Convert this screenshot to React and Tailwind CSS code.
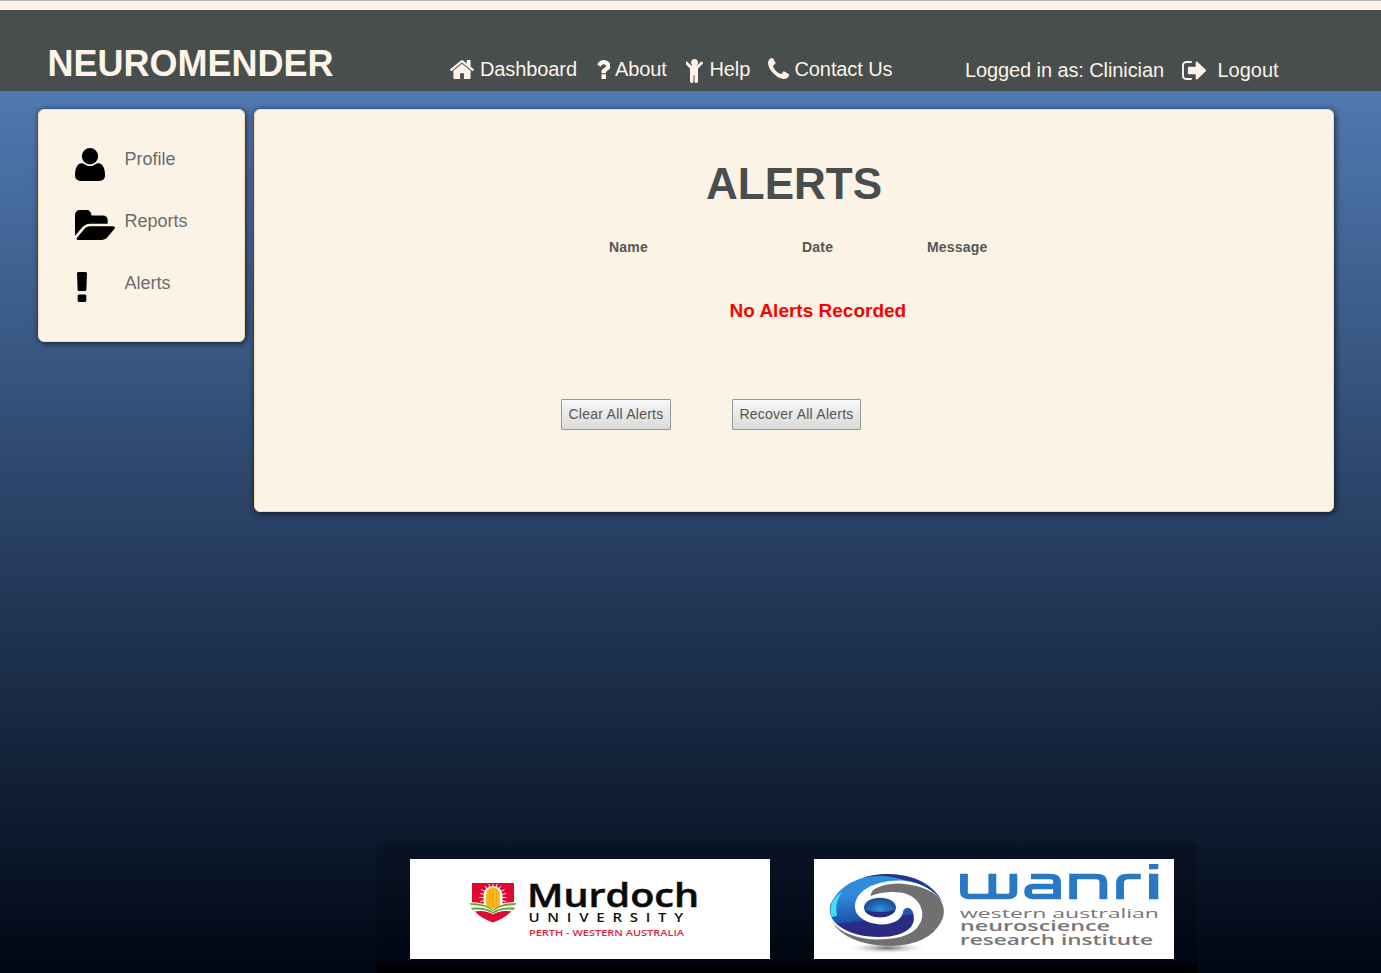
const user = "M1408 131q0 -120 -73 -189.5t-194 -69.5h-874q-121 0 -194 69.5t-73 189.5q0 53 3.5 103.5t14 109t26.5 108.5t43 97.5t62 81t85.5 53.5t111.5 20q9 0 42 -21.5t74.5 -48t108 -48t133.5 -21.5t133.5 21.5t108 48t74.5 48t42 21.5q61 0 111.5 -20t85.5 -53.5t62 -81t43 -97.5t26.5 -108.5t14 -109t3.5 -103.5zM1088 1024q0 -159 -112.5 -271.5t-271.5 -112.5t-271.5 112.5t-112.5 271.5t112.5 271.5t271.5 112.5t271.5 -112.5t112.5 -271.5z";
const home = "M1472 992v480q0 26-19 45t-45 19h-384v-384h-256v384h-384q-26 0-45-19t-19-45v-480q0-1 .5-3t.5-3l575-474 575 474q1 2 1 6zm223-69l-62 74q-8 9-21 11h-3q-13 0-21-7l-692-577-692 577q-12 8-24 7-13-2-21-11l-62-74q-8-10-7-23.5t11-21.5l719-599q32-26 76-26t76 26l244 204v-195q0-14 9-23t23-9h192q14 0 23 9t9 23v408l219 182q10 8 11 21.5t-7 23.5z";
const question = "M1088 1256v240q0 16-12 28t-28 12h-240q-16 0-28-12t-12-28v-240q0-16 12-28t28-12h240q16 0 28 12t12 28zm316-600q0 54-15.5 101t-35 76.5-55 59.5-57.5 43.5-61 35.5q-41 23-68.5 65t-27.5 67q0 17-12 32.5t-28 15.5h-240q-15 0-25.5-18.5t-10.5-37.5v-45q0-83 65-156.5t143-108.5q59-27 84-56t25-76q0-42-46.5-74t-107.5-32q-65 0-108 29-35 25-107 115-13 16-31 16-12 0-25-8l-164-125q-13-10-15.5-25t5.5-28q160-266 464-266 80 0 161 31t146 83 106 127.5 41 158.5z";
const child = "M1412 484l-292 292v824q0 46-33 79t-79 33-79-33-33-79v-384h-64v384q0 46-33 79t-79 33-79-33-33-79v-824l-292-292q-28-28-28-68t28-68q29-28 68.5-28t67.5 28l228 228h368l228-228q28-28 68-28t68 28q28 29 28 68.5t-28 67.5zm-292-100q0 93-65.5 158.5t-158.5 65.5-158.5-65.5-65.5-158.5 65.5-158.5 158.5-65.5 158.5 65.5 65.5 158.5z";
const phone = "M1600 1240q0 27-10 70.5t-21 68.5q-21 50-122 106-94 51-186 51-27 0-52.5-3.5t-57.5-12.5-47.5-14.5-55.5-20.5-49-18q-98-35-175-83-128-79-264.5-215.5t-215.5-264.5q-48-77-83-175-3-9-18-49t-20.5-55.5-14.5-47.5-12.5-57.5-3.5-52.5q0-92 51-186 56-101 106-122 25-11 68.5-21t70.5-10q14 0 21 3 18 6 53 76 11 19 30 54t35 63.5 31 53.5q3 4 17.5 25t21.5 35.5 7 28.5q0 20-28.5 50t-62 55-62 53-28.5 46q0 9 5 22.5t8.5 20.5 14 24 11.5 19q76 137 174 235t235 174q2 1 19 11.5t24 14 20.5 8.5 22.5 5q18 0 46-28.5t53-62 55-62 50-28.5q14 0 28.5 7t35.5 21.5 25 17.5q25 15 53.5 31t63.5 35 54 30q70 35 76 53 3 7 3 21z";
const signOut = "M704 1440q0 4 1 20t.5 26.5-3 23.5-10 19.5-20.5 6.5h-320q-119 0-203.5-84.5t-84.5-203.5v-704q0-119 84.5-203.5t203.5-84.5h320q13 0 22.5 9.5t9.5 22.5q0 4 1 20t.5 26.5-3 23.5-10 19.5-20.5 6.5h-320q-66 0-113 47t-47 113v704q0 66 47 113t113 47h312l11.5 1 11.5 3 8 5.5 7 9 2 13.5zm928-544q0 26-19 45l-544 544q-19 19-45 19t-45-19-19-45v-288h-448q-26 0-45-19t-19-45v-384q0-26 19-45t45-19h448v-288q0-26 19-45t45-19 45 19l544 544q19 19 19 45z";
const folder = "M1879 952q0 31-31 66l-336 396q-43 51-120.5 86.5t-143.5 35.5h-1088q-34 0-60.5-13t-26.5-43q0-31 31-66l336-396q43-51 120.5-86.5t143.5-35.5h1088q34 0 60.5 13t26.5 43zm-343-344v160h-832q-94 0-197 47.5t-164 119.5l-337 396-5 6q0-4-.5-12.5t-.5-12.5v-960q0-92 66-158t158-66h320q92 0 158 66t66 158v32h544q92 0 158 66t66 158z";
const exclamation = "M1088 1248v224q0 26-19 45t-45 19h-256q-26 0-45-19t-19-45v-224q0-26 19-45t45-19h256q26 0 45 19t19 45zm30-1056l-28 768q-1 26-20.5 45t-45.5 19h-256q-26 0-45.5-19t-20.5-45l-28-768q-1-26 17.5-45t44.5-19h320q26 0 44.5 19t17.5 45z";

function Glyph({ d, box, className, flip }) {
  return (
    <svg viewBox={box} preserveAspectRatio="none" fill="currentColor" className={"block shrink-0 " + className}>
      <path d={d} transform={flip ? "scale(1,-1)" : undefined} />
    </svg>
  );
}

function NavLink({ glyph, label, className }) {
  return (
    <a className={"flex items-start whitespace-nowrap " + className}>
      {glyph}
      <span className="leading-[23px]">{label}</span>
    </a>
  );
}

function Header() {
  return (
    <header className="flex h-[81px] items-start bg-[#484d4e] text-[20px] text-[#fdf3e7]">
      <h1 className="ml-[47.500px] mt-[33px] w-[402.500px] text-[36px] font-bold leading-[42px]">NEUROMENDER</h1>
      <nav className="mt-[48px] flex items-start tracking-[-0.1px]">
        <NavLink className="w-[145.500px] gap-[6px]" label="Dashboard" glyph={<Glyph d={home} box="89 250 1614 1286" className="mt-[2px] h-[19px] w-[24px]" />} />
        <NavLink className="w-[90.500px] gap-[5px]" label="About" glyph={<Glyph d={question} box="386 256 1018 1280" className="mt-[2px] h-[19px] w-[14.500px]" />} />
        <NavLink className="w-[82px] gap-[6.500px]" label="Help" glyph={<Glyph d={child} box="352 160 1088 1552" className="mt-px h-[24px] w-[17px]" />} />
        <NavLink className="w-[197px] gap-[5.500px]" label="Contact Us" glyph={<Glyph d={phone} box="192 128 1408 1408" className="h-[21px] w-[21px]" />} />
      </nav>
      <div className="mt-[49px] flex items-start whitespace-nowrap">
        <span className="w-[216.500px] leading-[23px] tracking-[-0.1px]">Logged in as: Clinician</span>
        <NavLink className="gap-[12px]" label="Logout" glyph={<Glyph d={signOut} box="64 256 1568 1280" className="mt-[2px] h-[19px] w-[24px]" />} />
      </div>
    </header>
  );
}

function SideItem({ glyph, label }) {
  return (
    <a className="flex h-[62px] items-start">
      <span className="w-[49.500px] shrink-0 text-black">{glyph}</span>
      <span className="mt-px text-[18px] leading-[21px] text-[#6b6b6b]">{label}</span>
    </a>
  );
}

const panel = "rounded-[6px] border border-[#f6d9b0] bg-[#fcf3e7] shadow-[1px_1px_6px_rgba(0,0,0,0.7)]";

function Sidebar() {
  return (
    <aside className={"h-[233px] w-[207px] pl-[36px] pt-[38px] " + panel}>
      <SideItem label="Profile" glyph={<Glyph flip d={user} box="0 -1408 1408 1536" className="h-[33px] w-[30px]" />} />
      <SideItem label="Reports" glyph={<Glyph d={folder} box="0 128 1879 1408" className="h-[30px] w-[40px]" />} />
      <SideItem label="Alerts" glyph={<Glyph d={exclamation} box="674 128 444 1408" className="ml-[2px] h-[30px] w-[10px]" />} />
    </aside>
  );
}

const button = "h-[31px] border border-[#979797] rounded-[1px] bg-linear-to-b/srgb from-[#f7f7f7] to-[#dadada] text-[14px] tracking-[0.25px] text-[#555] whitespace-nowrap text-center";

function Alerts() {
  return (
    <main className={"flex h-[403px] w-[1080px] flex-col " + panel}>
      <h2 className="mt-[48px] text-center text-[44px] font-bold leading-[52px] text-[#484d4e]">ALERTS</h2>
      <div className="ml-[354px] mt-[28px] flex text-[14px] font-bold leading-[18px] tracking-[0.2px] text-[#555]">
        <span className="w-[193px]">Name</span>
        <span className="w-[125px]">Date</span>
        <span>Message</span>
      </div>
      <p className="ml-[474.500px] mt-[43px] text-[19px] font-bold leading-[24px] text-[#f00]">No Alerts Recorded</p>
      <div className="ml-[306px] mt-[76px] flex gap-[61px]">
        <button className={"w-[110px] " + button}>Clear All Alerts</button>
        <button className={"w-[129px] " + button}>Recover All Alerts</button>
      </div>
    </main>
  );
}

function MurdochLogo() {
  return (
    <svg viewBox="0 0 360 100" className="block h-[100px] w-[360px] bg-white">
      <path d="M62 24H104V44Q104 56 83 63.500Q62 56 62 44Z" fill="#dc0a30" />
      <path d="M83 25V30M79 25L80 30M87 25L86 30M75 27L78 31M91 27L88 31M71.500 30.500L76 33M94.500 30.500L90 33M70 34.500L75 35.500M96 34.500L91 35.500M69.500 38.500H75M96.500 38.500H91M70 42.500L75 41.500M96 42.500L91 41.500" stroke="#fff" strokeWidth="0.9" />
      <path d="M73.500 46V37Q74 27 83 27Q92 27 92.500 37V46L83 52Z" fill="#fff" />
      <path d="M59 43Q76 43 83 49.500Q90 43 107 43L104 53Q91 50 83 55.500Q75 50 62 53Z" fill="#fff" />
      <path d="M76 46V36Q76.500 28.500 83 28.500Q89.500 28.500 90 36V46Q87 49.500 83 50Q79 49.500 76 46Z" fill="#fbb91b" />
      <path d="M79.500 31V47M83 30V49M86.500 31V47" stroke="#e8a214" strokeWidth="0.7" />
      <path d="M59.500 44Q76 44 83 51Q90 44 106.500 44L105 46Q90 46 83 52.300Q76 46 61 46ZM61 48.700Q76 47.500 83 53Q90 47.500 105 48.700L104 50.700Q90 49.500 83 54.800Q76 49.500 62 50.700Z" fill="#65a233" />
      <g fontFamily="'Open Sans', 'Noto Sans', sans-serif">
        <text x="117" y="48" fontSize="32.500" fontWeight="600" textLength="172" lengthAdjust="spacingAndGlyphs" fill="#0a0a0a" stroke="#0a0a0a" strokeWidth="0.5">Murdoch</text>
        <text transform="translate(118.500 63) scale(1.25 1)" fontSize="12" fontWeight="600" letterSpacing="4.300" textLength="128" lengthAdjust="spacing" fill="#111">UNIVERSITY</text>
        <text x="119" y="77" fontSize="9.500" fontWeight="600" textLength="155" lengthAdjust="spacingAndGlyphs" fill="#dc1f3d">PERTH - WESTERN AUSTRALIA</text>
      </g>
    </svg>
  );
}

function WanriLogo() {
  return (
    <svg viewBox="0 0 360 100" className="block h-[100px] w-[360px] bg-white">
      <defs>
        <linearGradient id="swirl" gradientUnits="userSpaceOnUse" x1="50" y1="15" x2="58" y2="79">
          <stop offset="0" stopColor="#2d8fdc" />
          <stop offset="0.3" stopColor="#2f8bda" />
          <stop offset="0.7" stopColor="#1f52ae" />
          <stop offset="0.73" stopColor="#2a2b85" />
          <stop offset="1" stopColor="#2b2b80" />
        </linearGradient>
        <radialGradient id="iris" cx="0.5" cy="0.6" r="0.6">
          <stop offset="0" stopColor="#2f93dc" />
          <stop offset="1" stopColor="#1c4497" />
        </radialGradient>
        <radialGradient id="shade">
          <stop offset="0" stopColor="#666" />
          <stop offset="1" stopColor="#fff" stopOpacity="0" />
        </radialGradient>
      </defs>
      <ellipse cx="73" cy="89" rx="42" ry="6" fill="url(#shade)" />
      <path d="M17.500 62Q30 79 62 80.500Q92 80.500 103 69Q112 58 106 46Q98 32 76 33Q65 33.500 56.500 37Q57 26 84 24.500Q112 26 124 38Q134 50 127 63Q115 86 76 87Q32 86 17.500 62Z" fill="#716f70" />
      <path d="M129 44Q115 15 72 15Q30 17 16.500 45Q13 58 25 67Q40 78 65 78Q88 78 97 68Q102 61 98.500 52Q94 46 89.500 51Q88 64 69 65.500Q50 65 42.500 54Q37 42 50 31Q64 21 88 21.500Q116 24 129 44Z" fill="url(#swirl)" />
      <path d="M17.500 58Q13 43 28 33Q20 44 23 57Z" fill="#43def8" />
      <path d="M48 19Q60 15 74 15Q113 16 129 44Q117 25 90 21Q70 14 48 19Z" fill="#293080" />
      <ellipse cx="66" cy="48.500" rx="16" ry="9.800" fill="url(#iris)" />
      <path d="M50.500 51Q66 55 81.500 51Q78 58.300 66 58.300Q54 58.300 50.500 51Z" fill="#292b80" />
      <g fill="none" stroke="#2878c3" strokeWidth="5.600" transform="scale(1.4 1)">
        <path d="M107.100 14.700V33Q107.100 37.500 111 37.500H138.500Q142.400 37.500 142.400 33V14.700M127.400 14.700V33Q127.400 37.500 123.500 37.500M127.400 33Q127.400 37.500 131 37.500" />
        <path d="M155 17.500H168.500Q173.600 17.500 173.600 22.500V37.500H157Q152.900 37.500 152.900 32.500Q152.900 27.500 157 27.500H173.600" />
        <path d="M185.100 40.300V17.500H201.500Q206.700 17.500 206.700 23V40.300M218.600 40.300V24Q218.600 17.500 224.500 17.500H233.400" />
      </g>
      <path d="M335 14.700H344.300V40.300H335ZM335 5H344.300V10.300H335Z" fill="#2878c3" />
      <g fontFamily="'Open Sans', 'Noto Sans', sans-serif" fill="#777576">
        <text x="146" y="59" fontSize="13.500" fontWeight="500" textLength="199" lengthAdjust="spacingAndGlyphs">western australian</text>
        <text x="146" y="72" fontSize="13.500" fontWeight="600" textLength="150" lengthAdjust="spacingAndGlyphs">neuroscience</text>
        <text x="146" y="86" fontSize="13.500" fontWeight="600" textLength="193" lengthAdjust="spacingAndGlyphs">research institute</text>
      </g>
    </svg>
  );
}

export default function App() {
  return (
    <div className="flex h-[973px] w-[1381px] flex-col overflow-hidden bg-[#000a18] font-['Liberation_Sans',Arial,sans-serif]">
      <div className="h-[10px] border-t border-[#b7b3b8] bg-[#fdf3e7]" />
      <Header />
      <div className="flex flex-1 flex-col bg-linear-to-b/srgb from-[#5079b1] to-[#000714]">
        <div className="flex h-[752px] items-start gap-[9px] pl-[38px] pt-[18px]">
          <Sidebar />
          <Alerts />
        </div>
        <footer className="ml-[377px] flex h-[130px] w-[820px] gap-[44px] border-b-[9px] border-black bg-black/15 pl-[33px] pt-[16px]">
          <MurdochLogo />
          <WanriLogo />
        </footer>
      </div>
    </div>
  );
}
